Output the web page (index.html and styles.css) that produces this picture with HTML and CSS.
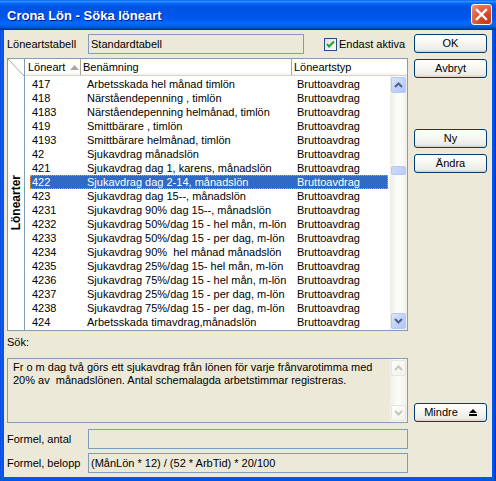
FILE: index.html
```html
<!DOCTYPE html>
<html>
<head>
<meta charset="utf-8">
<link rel="stylesheet" href="styles.css">
</head>
<body>
<div class="window">
  <div class="titlebar">
    <span class="title">Crona Lön - Söka löneart</span>
    <div class="close"><svg width="13" height="13" viewBox="0 0 13 13"><path d="M2 2 L11 11 M11 2 L2 11" stroke="#fff" stroke-width="2.4" stroke-linecap="square"/></svg></div>
  </div>
  <div class="client">
    <div class="main">
      <div class="toprow">
        <span class="label">Löneartstabell</span>
        <div class="field field-top">Standardtabell</div>
        <div class="check"><svg width="11" height="11" viewBox="0 0 11 11"><path d="M2 5 L4 7.5 L9 2.5" fill="none" stroke="#21A121" stroke-width="2"/></svg></div>
        <span class="checklabel">Endast aktiva</span>
      </div>
      <div class="list">
        <div class="tabstrip">
          <div class="corner"><svg width="16" height="17" viewBox="0 0 16 17"><path d="M0 0 L16 17" stroke="#ACA899" stroke-width="1"/></svg></div>
          <div class="tabwrap"><span class="tablabel">Lönearter</span></div>
        </div>
        <div class="content">
          <div class="header">
            <div class="hcell hc1">Löneart<svg class="sort" width="9" height="5" viewBox="0 0 9 5"><path d="M4.5 0 L9 5 L0 5 Z" fill="#ACA899"/></svg></div>
            <div class="hcell hc2">Benämning</div>
            <div class="hcell hc3">Löneartstyp</div>
          </div>
          <div class="body">
            <div class="rows">
              <div class="row"><span>417</span><span>Arbetsskada hel månad timlön</span><span>Bruttoavdrag</span></div>
              <div class="row"><span>418</span><span>Närståendepenning , timlön</span><span>Bruttoavdrag</span></div>
              <div class="row"><span>4183</span><span>Närståendepenning helmånad, timlön</span><span>Bruttoavdrag</span></div>
              <div class="row"><span>419</span><span>Smittbärare , timlön</span><span>Bruttoavdrag</span></div>
              <div class="row"><span>4193</span><span>Smittbärare helmånad, timlön</span><span>Bruttoavdrag</span></div>
              <div class="row"><span>42</span><span>Sjukavdrag månadslön</span><span>Bruttoavdrag</span></div>
              <div class="row"><span>421</span><span>Sjukavdrag dag 1, karens, månadslön</span><span>Bruttoavdrag</span></div>
              <div class="row selected"><span>422</span><span>Sjukavdrag dag 2-14, månadslön</span><span>Bruttoavdrag</span></div>
              <div class="row"><span>423</span><span>Sjukavdrag dag 15--, månadslön</span><span>Bruttoavdrag</span></div>
              <div class="row"><span>4231</span><span>Sjukavdrag 90% dag 15--, månadslön</span><span>Bruttoavdrag</span></div>
              <div class="row"><span>4232</span><span>Sjukavdrag 50%/dag 15 - hel mån, m-lön</span><span>Bruttoavdrag</span></div>
              <div class="row"><span>4233</span><span>Sjukavdrag 50%/dag 15 - per dag, m-lön</span><span>Bruttoavdrag</span></div>
              <div class="row"><span>4234</span><span>Sjukavdrag 90%  hel månad månadslön</span><span>Bruttoavdrag</span></div>
              <div class="row"><span>4235</span><span>Sjukavdrag 25%/dag 15- hel mån, m-lön</span><span>Bruttoavdrag</span></div>
              <div class="row"><span>4236</span><span>Sjukavdrag 75%/dag 15 - hel mån, m-lön</span><span>Bruttoavdrag</span></div>
              <div class="row"><span>4237</span><span>Sjukavdrag 25%/dag 15 - per dag, m-lön</span><span>Bruttoavdrag</span></div>
              <div class="row"><span>4238</span><span>Sjukavdrag 75%/dag 15 - per dag, m-lön</span><span>Bruttoavdrag</span></div>
              <div class="row"><span>424</span><span>Arbetsskada timavdrag,månadslön</span><span>Bruttoavdrag</span></div>
            </div>
            <div class="vscroll">
              <div class="sbtn"><svg width="9" height="6" viewBox="0 0 9 6"><path d="M1 5 L4.5 1.5 L8 5" fill="none" stroke="#4D6185" stroke-width="2"/></svg></div>
              <div class="track">
                <div class="thumb"></div>
              </div>
              <div class="sbtn"><svg width="9" height="6" viewBox="0 0 9 6"><path d="M1 1 L4.5 4.5 L8 1" fill="none" stroke="#4D6185" stroke-width="2"/></svg></div>
            </div>
          </div>
        </div>
      </div>
      <div class="sok">Sök:</div>
      <div class="desc">
        <div class="desctext">Fr o m dag två görs ett sjukavdrag från lönen för varje frånvarotimma med<br>20% av  månadslönen. Antal schemalagda arbetstimmar registreras.</div>
        <div class="vscroll disabled">
          <div class="sbtn"><svg width="9" height="6" viewBox="0 0 9 6"><path d="M1 5 L4.5 1.5 L8 5" fill="none" stroke="#C9C7BA" stroke-width="2"/></svg></div>
          <div class="track"></div>
          <div class="sbtn"><svg width="9" height="6" viewBox="0 0 9 6"><path d="M1 1 L4.5 4.5 L8 1" fill="none" stroke="#C9C7BA" stroke-width="2"/></svg></div>
        </div>
      </div>
      <div class="formrow first">
        <span class="label">Formel, antal</span>
        <div class="field field-wide"></div>
      </div>
      <div class="formrow">
        <span class="label">Formel, belopp</span>
        <div class="field field-wide">(MånLön * 12) / (52 * ArbTid) * 20/100</div>
      </div>
    </div>
    <div class="buttons">
      <div class="btn b-ok">OK</div>
      <div class="btn b-avbryt">Avbryt</div>
      <div class="btn b-ny">Ny</div>
      <div class="btn b-andra">Ändra</div>
      <div class="btn b-mindre">Mindre<svg class="mindre-icon" width="8" height="7" viewBox="0 0 8 7"><path d="M4 0 L8 4 L0 4 Z" fill="#000"/><rect x="0" y="5" width="8" height="2" fill="#000"/></svg></div>
    </div>
  </div>
</div>
</body>
</html>
```
FILE: styles.css
```css
* { box-sizing: border-box; }
html, body { margin: 0; padding: 0; }
body {
  width: 496px;
  height: 481px;
  overflow: hidden;
  font: 11px "Liberation Sans", Arial, sans-serif;
  color: #000;
  background: #0054E3;
}
.window {
  width: 496px;
  height: 481px;
  display: flex;
  flex-direction: column;
  background: linear-gradient(to right, #0831D9 0, #166AEE 1px, #0055EA 2px, #0055EA 494px, #0831D9 495px);
}
.titlebar {
  height: 30px;
  flex: none;
  display: flex;
  align-items: center;
  justify-content: space-between;
  padding: 0 4px 0 7px;
  background: linear-gradient(to bottom, #0058EE 0%, #3593FF 4%, #288EFF 6%, #127DFF 8%, #036FFC 10%, #0262EE 14%, #0057E5 20%, #0054E3 24%, #0055EB 56%, #005BF5 66%, #026AFE 76%, #0062EF 86%, #0052D6 92%, #0040AB 96%, #003092 100%);
}
.title {
  color: #fff;
  font: bold 13px "Liberation Sans", Arial, sans-serif;
  text-shadow: 1px 1px #0A1883;
  padding-top: 1px;
}
.close {
  width: 21px;
  height: 21px;
  border: 1px solid #fff;
  border-radius: 3px;
  background: radial-gradient(circle at 80% 85%, #C6381A 0%, #D9512E 45%, #E97A5B 80%, #F2A58C 100%);
  display: flex;
  align-items: center;
  justify-content: center;
  margin-top: -2px;
}
.client {
  flex: 1;
  margin: 0 4px 4px 4px;
  background: #ECE9D8;
  display: flex;
  gap: 6px;
  padding-left: 3px;
}
.main {
  width: 401px;
  display: flex;
  flex-direction: column;
  padding-top: 3px;
}
.toprow {
  height: 22px;
  display: flex;
  align-items: center;
}
.label {
  width: 81px;
  flex: none;
}
.field {
  height: 20px;
  border: 1px solid #7F9DB9;
  background: #ECE9D8;
  padding: 0 2px;
  line-height: 18px;
  white-space: pre;
}
.field-top { width: 216px; }
.field-wide { width: 320px; }
.check {
  width: 13px;
  height: 13px;
  margin-left: 20px;
  border: 1px solid #1C5180;
  background: linear-gradient(135deg, #DCDCD7 0%, #FFFFFF 100%);
  display: flex;
  align-items: center;
  justify-content: center;
}
.checklabel { margin-left: 2px; }

.list {
  margin-top: 3px;
  height: 273px;
  border: 1px solid #7F9DB9;
  background: #fff;
  display: flex;
}
.tabstrip {
  width: 17px;
  flex: none;
  border-right: 1px solid #7F9DB9;
  display: flex;
  flex-direction: column;
  background: #fff;
}
.corner { height: 17px; flex: none; }
.corner svg { display: block; }
.tabwrap {
  flex: 1;
  display: flex;
  align-items: center;
  justify-content: center;
}
.tablabel {
  writing-mode: vertical-rl;
  transform: rotate(180deg);
  font: bold 12px "Liberation Sans", Arial, sans-serif;
}
.content {
  flex: 1;
  display: flex;
  flex-direction: column;
}
.header {
  height: 17px;
  flex: none;
  display: flex;
  border-bottom: 1px solid #D6D3C6;
  background: linear-gradient(to bottom, #FFFFFF 0%, #FFFFFF 80%, #F3F2EC 100%);
  line-height: 16px;
}
.hcell {
  white-space: nowrap;
}
.hc1 {
  width: 55px;
  padding-left: 3px;
  display: flex;
  align-items: center;
}
.sort { margin-left: 5px; }
.hc2 {
  width: 211px;
  border-left: 1px solid #ACA899;
  padding-left: 2px;
}
.hc3 {
  flex: 1;
  border-left: 1px solid #ACA899;
  padding-left: 2px;
}
.body {
  flex: 1;
  display: flex;
}
.rows {
  flex: 1;
  padding-top: 1px;
}
.row {
  margin-left: 5px;
  width: 358px;
  height: 14px;
  line-height: 14px;
  display: grid;
  grid-template-columns: 55px 210px 1fr;
  white-space: pre;
}
.row span { padding-left: 2px; overflow: hidden; }
.row.selected {
  background: #316AC5;
  color: #fff;
  outline: 1px dotted #E0A040;
  outline-offset: -1px;
}
.vscroll {
  width: 17px;
  flex: none;
  display: flex;
  flex-direction: column;
  padding: 1px 1px 1px 1px;
  background: linear-gradient(to right, #EEEDE5 0%, #FBFBF8 40%, #FBFBF8 70%, #EEEDE5 100%);
}
.track {
  flex: 1;
  position: relative;
}
.thumb {
  position: absolute;
  left: 0;
  right: 0;
  top: 73px;
  height: 9px;
  border: 1px solid #B4C8F6;
  border-radius: 2px;
  background: linear-gradient(to right, #CAD9FC, #BACCF8);
}
.sbtn {
  height: 16px;
  border: 1px solid #B4C8F6;
  border-radius: 2px;
  background: linear-gradient(135deg, #DCE6FD 0%, #C1D3FB 50%, #B0C5F7 100%);
  display: flex;
  align-items: center;
  justify-content: center;
}
.disabled .sbtn {
  border-color: #E8E6DC;
  background: linear-gradient(135deg, #FDFDFB 0%, #F2F1EA 100%);
}
.disabled { background: linear-gradient(to right, #F1EFE6 0%, #FCFCFA 50%, #F1EFE6 100%); }

.sok {
  margin-top: 4px;
  height: 14px;
  line-height: 14px;
}
.desc {
  margin-top: 9px;
  height: 65px;
  border: 1px solid #7F9DB9;
  background: #ECE9D8;
  display: flex;
}
.desctext {
  flex: 1;
  padding: 2px 0 0 5px;
  line-height: 13px;
  white-space: pre;
}
.formrow {
  display: flex;
  align-items: center;
  margin-top: 4px;
}
.formrow.first { margin-top: 6px; }

.buttons {
  width: 73px;
  display: flex;
  flex-direction: column;
}
.btn {
  height: 19px;
  border: 1px solid #003C74;
  border-radius: 3px;
  background: linear-gradient(to bottom, #FFFFFF 0%, #F6F5F0 50%, #ECEBE5 85%, #D6D0C5 100%);
  display: flex;
  align-items: center;
  justify-content: center;
  line-height: 17px;
}
.b-ok { margin-top: 4px; }
.b-avbryt { margin-top: 6px; }
.b-ny { margin-top: 51px; }
.b-andra { margin-top: 6px; }
.b-mindre { margin-top: 230px; }
.mindre-icon { margin-left: 11px; }
```
